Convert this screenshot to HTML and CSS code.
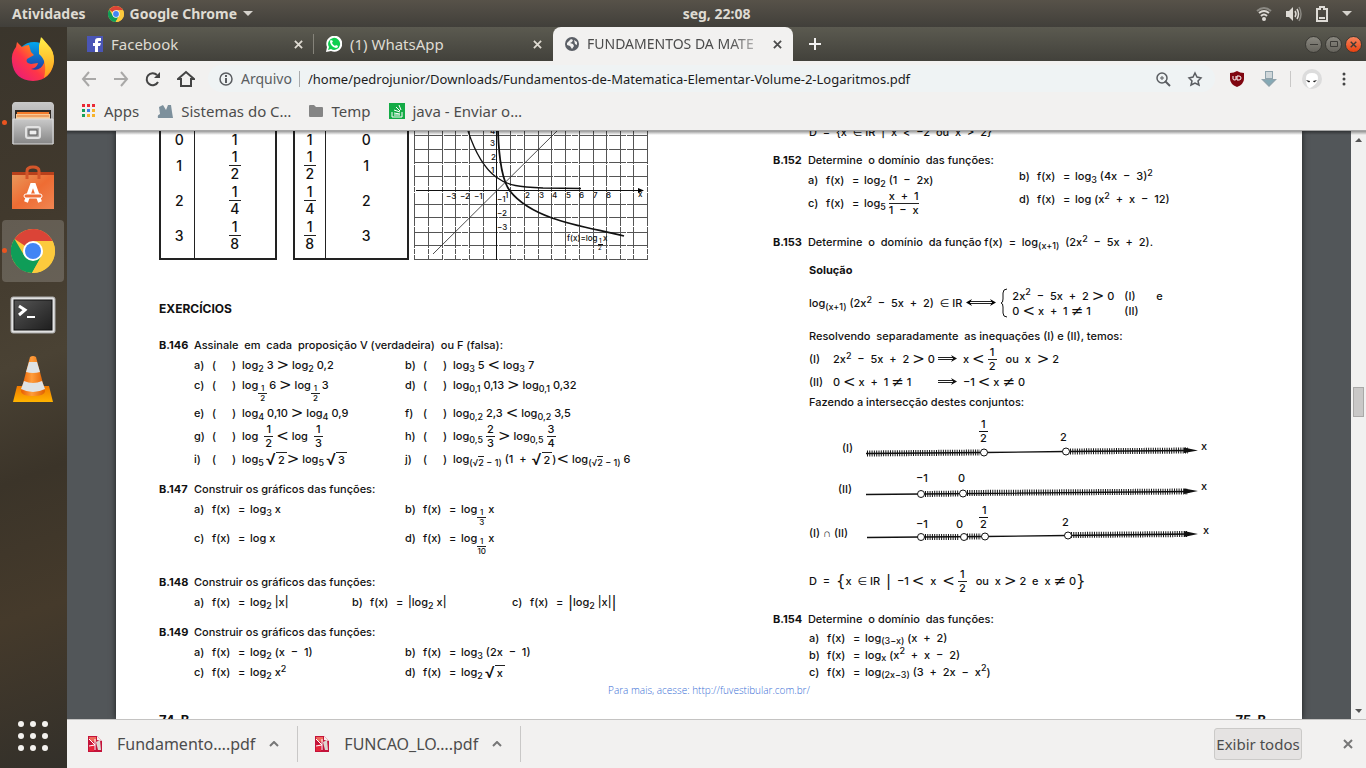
FILE: index.html
```html
<!DOCTYPE html>
<html lang="pt-BR">
<head>
<meta charset="utf-8">
<title>Fundamentos de Matemática Elementar</title>
<link rel="stylesheet" href="styles.css">
</head>
<body>
<svg class="defs" aria-hidden="true">
  <defs>
    <linearGradient id="ffr" x1="0" y1="1" x2="1" y2="0"><stop offset="0" stop-color="#e31587"/><stop offset=".4" stop-color="#ff3647"/><stop offset=".7" stop-color="#ff980e"/><stop offset="1" stop-color="#fff44f"/></linearGradient>
    <linearGradient id="ffb" x1="0" y1="0" x2="0" y2="1"><stop offset="0" stop-color="#00a8f0"/><stop offset="1" stop-color="#2a1e8c"/></linearGradient>
    <linearGradient id="ffy" x1="0" y1="0" x2="0" y2="1"><stop offset="0" stop-color="#fff14a"/><stop offset="1" stop-color="#ff9c1a"/></linearGradient>
    <linearGradient id="steel" x1="0" y1="0" x2="0" y2="1"><stop offset="0" stop-color="#c9c9c9"/><stop offset="1" stop-color="#868686"/></linearGradient>
    <linearGradient id="bag" x1="0" y1="0" x2="1" y2="1"><stop offset="0" stop-color="#e9975b"/><stop offset=".5" stop-color="#ee6c33"/><stop offset="1" stop-color="#f08653"/></linearGradient>
    <linearGradient id="term" x1="0" y1="0" x2="1" y2="1"><stop offset="0" stop-color="#555"/><stop offset="1" stop-color="#1e1e1e"/></linearGradient>
    <linearGradient id="vlc" x1="0" y1="0" x2="1" y2="0"><stop offset="0" stop-color="#e85e00"/><stop offset=".45" stop-color="#ff9d3c"/><stop offset="1" stop-color="#e06000"/></linearGradient>
    <linearGradient id="base" x1="0" y1="0" x2="0" y2="1"><stop offset="0" stop-color="#f07800"/><stop offset="1" stop-color="#ffb400"/></linearGradient>
    <symbol id="chrome" viewBox="0 0 44 44">
      <circle cx="22" cy="22" r="22" fill="#fcca3d"/>
      <path d="M22 22 3.500 10A22 22 0 0 1 41.500 12H22Z" fill="#db4437"/>
      <path d="M3.500 10A22 22 0 0 0 21 44L30.500 27 22 22 13.500 27Z" fill="#0f9d58"/>
      <path d="M22 12H41.500A22 22 0 0 1 21 44L30.500 27Z" fill="#fcca3d"/>
      <circle cx="22" cy="22" r="10" fill="#fff"/><circle cx="22" cy="22" r="8" fill="#4285f4"/>
    </symbol>
    <symbol id="pdf" viewBox="0 0 16 16">
      <path d="M1 0H10L15 5V16H1Z" fill="#c4123a"/><path d="M2 1H9V6L3 5Z" fill="#ef6a5c"/><path d="M2 11 7 6V15H2Z" fill="#e6253a"/>
      <path d="M2 3 8 9 2 10M8 3V14" fill="none" stroke="#fff" stroke-width="1"/><path d="M9 6 13 4 14 14H11Z" fill="#dcd6d0"/><path d="M10 0V4L15 5Z" fill="#f5f0ee"/>
    </symbol>
    <symbol id="x" viewBox="0 0 10 10"><path d="M1 1 9 9M9 1 1 9" stroke="currentColor" stroke-width="2" fill="none"/></symbol>
    <symbol id="imp" viewBox="0 0 22 8"><path d="M1 2.500H17M1 4.500H17" stroke="#222" stroke-width="1"/><path d="M14 0 20 3.500 14 7 16 3.500Z" fill="#111"/></symbol>
  </defs>
</svg>

<header class="topbar">
  <button class="top-btn" type="button">Atividades</button>
  <button class="top-btn app" type="button"><svg width="16" height="16"><use href="#chrome"/></svg>Google Chrome<svg width="10" height="6"><path d="M0 0H10L5 5Z" fill="#d5d2cc"/></svg></button>
  <span class="clock">seg, 22:08</span>
  <div class="status">
    <svg width="16" height="16" viewBox="0 0 16 16" fill="none" stroke="#dedbd6"><path d="M1 5Q8-1 15 5" stroke="#8b8983" stroke-width="2"/><path d="M3 7Q8 3 13 7M5 10Q8 7 11 10" stroke-width="2"/><circle cx="8" cy="13" r="2" fill="#dedbd6" stroke="none"/></svg>
    <svg width="16" height="16" viewBox="0 0 16 16"><path d="M0 5H3L7 1V15L3 11H0Z" fill="#dedbd6"/><path d="M9 5Q11 8 9 11M11 3Q14 8 11 13" fill="none" stroke="#dedbd6" stroke-width="1.500"/><path d="M13 1Q17 8 13 15" fill="none" stroke="#8b8983" stroke-width="1.500"/></svg>
    <svg width="12" height="16" viewBox="0 0 12 16"><path d="M1 3H4V1H8V3H11V15H1Z" fill="none" stroke="#dedbd6" stroke-width="2"/><path d="M3 12H9" stroke="#dedbd6" stroke-width="2"/></svg>
    <svg width="10" height="6"><path d="M0 0H10L5 5Z" fill="#d5d2cc"/></svg>
  </div>
</header>

<div class="desktop">
  <nav class="dock" aria-label="Aplicativos">
    <button type="button" aria-label="Firefox"><svg width="46" height="46" viewBox="0 0 46 46"><circle cx="24" cy="24" r="18" fill="url(#ffb)"/><path d="M6 11 7 6 12 11Q16 9 19 9L21 16 24 19 17 23Q15 27 21 28L28 27Q27 32 21 33 30 36 34 27 36 15 29 10L32 2 38 9Q44 14 44 25 42 44 23 45 4 44 2 26 1 17 6 11Z" fill="url(#ffr)"/><path d="M29 10 31 1 37 8Q44 15 44 25 43 36 34 42 38 25 29 18Z" fill="url(#ffy)"/></svg></button>
    <button class="run" type="button" aria-label="Arquivos"><svg width="44" height="46" viewBox="0 0 44 46"><path d="M1 5Q2 2 4 2H40Q42 2 43 5L43 44H1Z" fill="url(#steel)"/><path d="M4 10H40V19H4Z" fill="#302a25"/><path d="M6 12H38V14H6Z" fill="#f47b2b"/><path d="M5 14H39V19H5Z" fill="#f7c894"/><path d="M6 16H38" stroke="#e5762f"/><path d="M2 19H42V44H2Z" fill="url(#steel)" stroke="#ddd"/><rect x="15" y="27" width="14" height="11" rx="2" fill="#a8a8a8" stroke="#e2e2e2" stroke-width="2"/><rect x="18" y="30" width="8" height="5" fill="#eee" stroke="#555"/></svg></button>
    <button type="button" aria-label="Programas"><svg width="42" height="46" viewBox="0 0 42 46"><path d="M0 8H42V17H0Z" fill="#b8401b"/><path d="M0 11H42V45H0Z" fill="url(#bag)"/><path d="M15 15V7Q15 3 21 3T27 7V15" fill="none" stroke="#d4562a" stroke-width="3"/><path d="M14 38 20 21H22L28 38" fill="none" stroke="#fff" stroke-width="4"/><rect x="12" y="30" width="18" height="4" rx="2" fill="#ef6f38" stroke="#fff" stroke-width="1"/></svg></button>
    <button class="run current" type="button" aria-label="Google Chrome"><svg width="44" height="44"><use href="#chrome"/></svg></button>
    <button type="button" aria-label="Terminal"><svg width="46" height="40" viewBox="0 0 46 40"><rect x="1" y="2" width="44" height="36" rx="2" fill="#e2e2e2" stroke="#aaa"/><rect x="4" y="5" width="38" height="30" fill="url(#term)" stroke="#111"/><path d="M9 11 15 15 9 20" fill="none" stroke="#fff" stroke-width="3"/><path d="M17 22H25" stroke="#fff" stroke-width="2"/></svg></button>
    <button type="button" aria-label="VLC"><svg width="42" height="48" viewBox="0 0 42 48"><path d="M5 31H37L41 47H1Z" fill="url(#base)"/><path d="M18 2Q21 0 24 2L33 36Q33 41 21 41T9 36Z" fill="url(#vlc)"/><path d="M17 7H25L28 17Q21 19 14 17ZM12 26Q21 30 30 26L33 34Q21 40 9 34Z" fill="#dfe3e5"/></svg></button>
    <button class="apps" type="button" aria-label="Mostrar aplicativos"><svg width="32" height="32" viewBox="0 0 32 32" fill="#f4f2ef"><circle cx="4" cy="4" r="3"/><circle cx="16" cy="4" r="3"/><circle cx="28" cy="4" r="3"/><circle cx="4" cy="16" r="3"/><circle cx="16" cy="16" r="3"/><circle cx="28" cy="16" r="3"/><circle cx="4" cy="28" r="3"/><circle cx="16" cy="28" r="3"/><circle cx="28" cy="28" r="3"/></svg></button>
  </nav>

  <main class="window">
    <div class="tabs">
      <div class="tab first"><svg width="16" height="16"><rect width="16" height="16" fill="#4a55b5"/><path d="M8 16V10H6V7H8V5Q8 2 11 2H14V5H12Q11 5 11 6V7H14L13 10H11V16Z" fill="#fff"/></svg><a href="#fb">Facebook</a><button type="button" aria-label="Fechar"><svg width="9" height="9"><use href="#x"/></svg></button></div>
      <div class="tab"><svg width="16" height="16" viewBox="0 0 16 16"><path d="M0 16 1 11A8 8 0 1 1 5 15Z" fill="#fff"/><path d="M2 14 3 11A6 6 0 1 1 5 13Z" fill="#10cf50"/><path d="M5 4 7 5 6 7Q7 9 9 10L10 9 12 10Q12 12 10 12 5 11 4 6 4 4 5 4Z" fill="#fff"/></svg><a href="#wa">(1) WhatsApp</a><button type="button" aria-label="Fechar"><svg width="9" height="9"><use href="#x"/></svg></button></div>
      <div class="tab active"><svg width="14" height="14" viewBox="0 0 14 14"><circle cx="7" cy="7" r="7" fill="#5b5f66"/><path d="M2 6 6 2 8 3 7 5 5 6 8 7 9 9 7 12 5 9 2 8ZM9 3 12 5V8L10 7Z" fill="#f2f1f0"/></svg><a href="#doc">FUNDAMENTOS DA MATE</a><button type="button" aria-label="Fechar"><svg width="9" height="9"><use href="#x"/></svg></button></div>
      <button class="newtab" type="button" aria-label="Nova guia"><svg width="12" height="12"><path d="M6 0V12M0 6H12" stroke="#f2f1f0" stroke-width="2"/></svg></button>
      <div class="winbtns">
        <button type="button" aria-label="Minimizar"><svg width="8" height="8"><path d="M0 4.500H8" stroke="#3c3b37"/></svg></button>
        <button type="button" aria-label="Maximizar"><svg width="8" height="8"><path d="M.5 1.500H7.500V6.500H.5Z" fill="none" stroke="#3c3b37"/></svg></button>
        <button class="close" type="button" aria-label="Fechar janela"><svg width="7" height="7"><use href="#x"/></svg></button>
      </div>
    </div>

    <div class="toolbar">
      <button class="dim" type="button" aria-label="Voltar"><svg width="16" height="16" viewBox="0 0 16 16"><path d="M15 8H2M8 1 2 8 8 15" fill="none" stroke="currentColor" stroke-width="2"/></svg></button>
      <button class="dim" type="button" aria-label="Avançar"><svg width="16" height="16" viewBox="0 0 16 16"><path d="M1 8H14M8 1 14 8 8 15" fill="none" stroke="currentColor" stroke-width="2"/></svg></button>
      <button type="button" aria-label="Recarregar"><svg width="16" height="16" viewBox="0 0 16 16"><path d="M13 11A6 6 0 1 1 12 4" fill="none" stroke="currentColor" stroke-width="2"/><path d="M15 1V7H9Z" fill="currentColor"/></svg></button>
      <button type="button" aria-label="Início"><svg width="18" height="18" viewBox="0 0 18 18"><path d="M1 9 9 2 17 9H14V16H4V9Z" fill="none" stroke="currentColor" stroke-width="2"/></svg></button>
      <div class="omni">
        <svg width="16" height="16" viewBox="0 0 16 16"><circle cx="8" cy="8" r="6" fill="none" stroke="#5a5d61" stroke-width="1.500"/><path d="M8 7V12M8 4V6" stroke="#5a5d61" stroke-width="2"/></svg>
        <label for="url">Arquivo</label>
        <input id="url" type="text" value="/home/pedrojunior/Downloads/Fundamentos-de-Matematica-Elementar-Volume-2-Logaritmos.pdf">
        <button type="button" aria-label="Zoom"><svg width="16" height="16" viewBox="0 0 16 16" fill="none" stroke="currentColor"><circle cx="7" cy="7" r="5" stroke-width="1.500"/><path d="M10 10 15 15" stroke-width="2"/><path d="M7 5V9M5 7H9"/></svg></button>
        <button type="button" aria-label="Favorito"><svg width="16" height="16" viewBox="0 0 16 16"><path d="M8 2 10 6 14 7 11 10 12 14 8 12 4 14 5 10 2 7 6 6Z" fill="none" stroke="currentColor" stroke-width="1.500"/></svg></button>
      </div>
      <button type="button" aria-label="uBlock"><svg width="16" height="16" viewBox="0 0 16 16"><path d="M8 0Q11 2 15 2V8Q15 13 8 16 1 13 1 8V2Q5 2 8 0Z" fill="#800610"/><path d="M4 5V8Q4 9 6 9 7 9 7 8V5M8 9V5H10Q12 5 12 7T10 9Z" fill="none" stroke="#fff" stroke-width="1"/></svg></button>
      <button type="button" aria-label="Baixar"><svg width="16" height="16" viewBox="0 0 16 16"><path d="M4 0H12V8H16L8 16 0 8H4Z" fill="#8fa3ac"/><path d="M5 1H11V7H5Z" fill="#cfd6d9"/><path d="M3 9H13L8 14Z" fill="#84a9b5"/></svg></button>
      <span class="vsep"></span>
      <button class="avatar" type="button" aria-label="Perfil"><svg width="20" height="20" viewBox="0 0 20 20"><circle cx="10" cy="10" r="10" fill="#dcdcdc"/><path d="M4 9Q4 4 10 4T16 9 10 18 4 9Z" fill="#fff"/><path d="M4 11 8 12Q8 14 6 13ZM15 11 11 12Q12 14 13 13Z" fill="#222"/></svg></button>
      <button type="button" aria-label="Menu"><svg width="16" height="16" fill="currentColor"><circle cx="8" cy="3" r="1.500"/><circle cx="8" cy="8" r="1.500"/><circle cx="8" cy="13" r="1.500"/></svg></button>
    </div>

    <nav class="bookmarks" aria-label="Favoritos">
      <a href="#apps"><svg width="14" height="14" viewBox="0 0 14 14"><path d="M0 0H3V3H0ZM5 0H8V3H5ZM10 0H13V3H10Z" fill="#ea2a35"/><path d="M0 5H3V8H0ZM0 10H3V13H0Z" fill="#18a05a"/><path d="M5 5H8V8H5Z" fill="#3f7de8"/><path d="M10 5H13V8H10ZM5 10H8V13H5ZM10 10H13V13H10Z" fill="#f7b32a"/></svg>Apps</a>
      <a href="#sis"><svg width="16" height="14" viewBox="0 0 16 14"><path d="M1 14Q0 11 3 10L2 3 6 1 9 6 11 1H14L15 8 16 14Z" fill="#7d909c"/></svg>Sistemas do C…</a>
      <a href="#temp"><svg width="14" height="12" viewBox="0 0 14 12"><path d="M0 1Q0 0 1 0H5L7 2H13Q14 2 14 3V11Q14 12 13 12H1Q0 12 0 11Z" fill="#858585"/></svg>Temp</a>
      <a href="#java"><svg width="16" height="16" viewBox="0 0 16 16"><path d="M0 0H16V16H0Z" fill="#14ab46"/><path d="M3 9V14H13V9M5 12H11M5 10 11 11M5 7 11 9M7 4 11 8M10 2 12 7" fill="none" stroke="#fff"/></svg>java - Enviar o…</a>
    </nav>

    <div class="viewer">
      <article class="page">
        <section class="left">
          <div class="figures">
            <table class="t1"><tbody>
              <tr class="r0"><td>0</td><td>1</td></tr>
              <tr><td>1</td><td><span class="frac"><i>1</i><i>2</i></span></td></tr>
              <tr><td>2</td><td><span class="frac"><i>1</i><i>4</i></span></td></tr>
              <tr class="last"><td>3</td><td><span class="frac"><i>1</i><i>8</i></span></td></tr>
            </tbody></table>
            <table class="t2"><tbody>
              <tr class="r0"><td>1</td><td>0</td></tr>
              <tr><td><span class="frac"><i>1</i><i>2</i></span></td><td>1</td></tr>
              <tr><td><span class="frac"><i>1</i><i>4</i></span></td><td>2</td></tr>
              <tr class="last"><td><span class="frac"><i>1</i><i>8</i></span></td><td>3</td></tr>
            </tbody></table>
            <svg class="graph" width="236" height="129" viewBox="413 131 236 129">
              <path d="M414.500 131V260M428.500 131V260M442.500 131V260M455.500 131V260M469.500 131V260M483.500 131V260M510.500 131V260M524.500 131V260M538.500 131V260M551.500 131V260M565.500 131V260M579.500 131V260M593.500 131V260M606.500 131V260M620.500 131V260M633.500 131V260M647.500 131V260" stroke="#555" stroke-dasharray="33 1 21 1 5 1"/>
              <path d="M414 135.500H648M414 149.500H648M414 162.500H648M414 176.500H648M414 204.500H648M414 217.500H648M414 232.500H648M414 245.500H648M414 259.500H648" stroke="#555" stroke-dasharray="29 1 17 1 6 1"/>
              <path d="M496.500 131V260M416 190.500H642" stroke="#111"/><path d="M638 188 644 190.500 638 193Z"/>
              <path d="M433 254 557 131" stroke="#222" stroke-width=".8"/>
              <g fill="none" stroke="#111"><path d="M468 131C474 149 484 168 496 177S520 187 543 188L581 188.500" stroke-width="1.300"/><path d="M498 131C499 162 503 182 510 191S530 210 552 218 600 230 624 236" stroke-width="1.800"/></g>
              <g class="lbl"><text x="446" y="199">−3</text><text x="460" y="199">−2</text><text x="474" y="199">−1</text><text x="505" y="198">1</text><text x="525" y="198">2</text><text x="539" y="198">3</text><text x="552" y="198">4</text><text x="566" y="198">5</text><text x="579" y="198">6</text><text x="593" y="198">7</text><text x="606" y="198">8</text><text x="638" y="197">x</text><text x="490" y="146">3</text><text x="491" y="160">2</text><text x="491" y="173">1</text><text x="497" y="202">−1</text><text x="497" y="216">−2</text><text x="497" y="230">−3</text><text x="490" y="134">4</text><text x="567" y="241">f(x)=log</text><text x="603" y="241">x</text><text class="tiny" x="599" y="243">1</text><text class="tiny" x="598" y="250">2</text><path d="M598 244.500H603" stroke="#111"/></g>
            </svg>
          </div>

          <h2 class="heading">EXERCÍCIOS</h2>

          <div class="ex b146">
            <h3><b>B.146</b> Assinale  em  cada  proposição V (verdadeira)  ou F (falsa):</h3>
            <div class="opts">
              <p><span class="k">a)</span><span class="box">(</span><span class="cb">)</span>log<sub>2</sub> 3 <span class="rel">&gt;</span> log<sub>2</sub> 0,2</p>
              <p><span class="k">b)</span><span class="box">(</span><span class="cb">)</span>log<sub>3</sub> 5 <span class="rel">&lt;</span> log<sub>3</sub> 7</p>
              <p><span class="k">c)</span><span class="box">(</span><span class="cb">)</span>log<span class="subfrac"><i>1</i><i>2</i></span>6 <span class="rel">&gt;</span> log<span class="subfrac"><i>1</i><i>2</i></span>3</p>
              <p><span class="k">d)</span><span class="box">(</span><span class="cb">)</span>log<sub>0,1</sub> 0,13 <span class="rel">&gt;</span> log<sub>0,1</sub> 0,32</p>
            </div>
            <div class="opts gap8">
              <p><span class="k">e)</span><span class="box">(</span><span class="cb">)</span>log<sub>4</sub> 0,10 <span class="rel">&gt;</span> log<sub>4</sub> 0,9</p>
              <p><span class="k">f)</span><span class="box">(</span><span class="cb">)</span>log<sub>0,2</sub> 2,3 <span class="rel">&lt;</span> log<sub>0,2</sub> 3,5</p>
              <p class="tall"><span class="k">g)</span><span class="box">(</span><span class="cb">)</span>log <span class="frac"><i>1</i><i>2</i></span><span class="rel">&lt;</span> log <span class="frac"><i>1</i><i>3</i></span></p>
              <p class="tall"><span class="k">h)</span><span class="box">(</span><span class="cb">)</span>log<sub>0,5</sub> <span class="frac"><i>2</i><i>3</i></span> <span class="rel">&gt;</span> log<sub>0,5</sub> <span class="frac"><i>3</i><i>4</i></span></p>
              <p><span class="k">i)</span><span class="box">(</span><span class="cb">)</span>log<sub>5</sub><span class="root">√</span><span class="rad">2</span> <span class="rel">&gt;</span> log<sub>5</sub><span class="root">√</span><span class="rad">3</span></p>
              <p><span class="k">j)</span><span class="box">(</span><span class="cb">)</span>log<sub>(√<span class="over">2</span> − 1)</sub> (1  + <span class="root">√</span><span class="rad">2</span>)<span class="rel">&lt;</span> log<sub>(√<span class="over">2</span> − 1)</sub> 6</p>
            </div>
          </div>

          <div class="ex mt10">
            <h3><b>B.147</b> Construir os gráficos das funções:</h3>
            <div class="opts spread">
              <p><span class="k">a)</span><span class="fx">f(x)</span><span class="eq">=</span>log<sub>3</sub> x</p>
              <p><span class="k">b)</span><span class="fx">f(x)</span><span class="eq">=</span>log<span class="subfrac"><i>1</i><i>3</i></span>x</p>
              <p><span class="k">c)</span><span class="fx">f(x)</span><span class="eq">=</span>log x</p>
              <p><span class="k">d)</span><span class="fx">f(x)</span><span class="eq">=</span>log<span class="subfrac"><i>1</i><i>10</i></span>x</p>
            </div>
          </div>

          <div class="ex mt24">
            <h3><b>B.148</b> Construir os gráficos das funções:</h3>
            <div class="opts three">
              <p><span class="k">a)</span><span class="fx">f(x)</span><span class="eq">=</span>log<sub>2</sub> |x|</p>
              <p><span class="k">b)</span><span class="fx">f(x)</span><span class="eq">=</span>|log<sub>2</sub> x|</p>
              <p><span class="k">c)</span><span class="fx">f(x)</span><span class="eq">=</span><span class="rel">|</span>log<sub>2</sub> |x|<span class="rel">|</span></p>
            </div>
          </div>

          <div class="ex mt10">
            <h3><b>B.149</b> Construir os gráficos das funções:</h3>
            <div class="opts">
              <p><span class="k">a)</span><span class="fx">f(x)</span><span class="eq">=</span>log<sub>2</sub> (x  −  1)</p>
              <p><span class="k">b)</span><span class="fx">f(x)</span><span class="eq">=</span>log<sub>3</sub> (2x  −  1)</p>
              <p><span class="k">c)</span><span class="fx">f(x)</span><span class="eq">=</span>log<sub>2</sub> x<sup>2</sup></p>
              <p><span class="k">d)</span><span class="fx">f(x)</span><span class="eq">=</span>log<sub>2</sub><span class="root">√</span><span class="rad">x</span></p>
            </div>
          </div>
        </section>

        <section class="right">
          <p class="ind cut">D  =  {x  ∈ IR  |  x  &lt;  −2  ou  x  &gt;  2}</p>
          <div class="ex mt8">
            <h3><b>B.152</b> Determine  o domínio  das funções:</h3>
            <div class="opts">
              <p><span class="k">a)</span><span class="fx">f(x)</span><span class="eq">=</span>log<sub>2</sub> (1  −  2x)</p>
              <p class="up"><span class="k">b)</span><span class="fx">f(x)</span><span class="eq">=</span>log<sub>3</sub> (4x  −  3)<sup>2</sup></p>
              <p class="tall"><span class="k">c)</span><span class="fx">f(x)</span><span class="eq">=</span>log<sub>5</sub> <span class="frac"><i>x  +  1</i><i>1  −  x</i></span></p>
              <p class="tall up"><span class="k">d)</span><span class="fx">f(x)</span><span class="eq">=</span>log (x<sup>2</sup>  +  x  −  12)</p>
            </div>
          </div>
          <div class="ex mt16">
            <h3><b>B.153</b> Determine  o  domínio  da função f(x)  =  log<sub>(x+1)</sub>  (2x<sup>2</sup>  −  5x  +  2).</h3>
            <h4 class="ind mt8">Solução</h4>
            <div class="ind system mt8">
              <p>log<sub>(x+1)</sub> (2x<sup>2</sup>  −  5x  +  2)  ∈ IR</p>
              <svg width="30" height="8" viewBox="0 0 30 8"><path d="M3 2.500H27M3 4.500H27" stroke="#222"/><path d="M6 0 0 3.500 6 7 4 3.500ZM24 0 30 3.500 24 7 26 3.500Z"/></svg>
              <svg width="8" height="30" viewBox="0 0 8 30"><path d="M7 1Q3 1 3 5V11Q3 15 1 15 3 15 3 19V25Q3 29 7 29" fill="none" stroke="#111"/></svg>
              <div class="cases">
                <p>2x<sup>2</sup>  −  5x  +  2 <span class="rel">&gt;</span> 0</p><p>(I)</p><p>e</p>
                <p>0 <span class="rel">&lt;</span> x  +  1 <span class="rel">≠</span> 1</p><p>(II)</p>
              </div>
            </div>
            <p class="ind mt8">Resolvendo  separadamente  as inequações (I) e (II), temos:</p>
            <p class="ind steps tall"><span class="num">(I)</span><span class="lhs">2x<sup>2</sup>  −  5x  +  2 <span class="rel">&gt;</span> 0</span><svg width="22" height="8"><use href="#imp"/></svg>x <span class="rel">&lt;</span> <span class="frac"><i>1</i><i>2</i></span>  ou  x  <span class="rel">&gt;</span> 2</p>
            <p class="ind steps"><span class="num">(II)</span><span class="lhs">0 <span class="rel">&lt;</span> x  +  1 <span class="rel">≠</span> 1</span><svg width="22" height="8"><use href="#imp"/></svg>−1 <span class="rel">&lt;</span> x <span class="rel">≠</span> 0</p>
            <p class="ind">Fazendo a intersecção destes conjuntos:</p>
          </div>
          <svg class="lines" width="420" height="136" viewBox="800 411 420 136">
            <g stroke="#111" fill="none">
              <path d="M866 452.500 984 451.500 1066 450.500 1190 449.500M866 493.500 921 493 1190 490.500M867 536.500 921 536 985 535.500 1067 534.500 1190 533" stroke-width="1.300"/>
              <g stroke-width="6" stroke-dasharray="1 1.300"><path d="M867 452.500 980 451.500"/><path d="M1070 450.500 1188 449.500"/><path d="M925 493 959 492.500"/><path d="M967 492 1188 490.500"/><path d="M925 536 959 535.900"/><path d="M967 535.500 981 535.400"/><path d="M1071 534 1188 533"/></g>
              <path d="M979 430.500H988M979 516.500H988"/>
              <path d="M1184 446.500 1198 449.500 1184 452ZM1184 487.500 1198 490 1184 493ZM1184 530 1198 533 1184 536Z" fill="#111" stroke="none"/>
            </g>
            <g fill="#fff" stroke="#111"><circle cx="984" cy="451.500" r="3.500"/><circle cx="1066" cy="450.500" r="3.500"/><circle cx="921" cy="493" r="3.500"/><circle cx="963" cy="492.500" r="3.500"/><circle cx="921" cy="536" r="3.500"/><circle cx="964" cy="536" r="3.500"/><circle cx="985" cy="535.500" r="3.500"/><circle cx="1068" cy="534.500" r="3.500"/></g>
            <g class="mtx"><text x="842" y="451">(I)</text><text x="838" y="492">(II)</text><text x="809" y="536">(I) ∩ (II)</text><text x="1201" y="449">x</text><text x="1201" y="489">x</text><text x="1203" y="533">x</text><text x="981" y="427">1</text><text x="980" y="441">2</text><text x="1060" y="440">2</text><text x="916" y="481">−1</text><text x="958" y="481">0</text><text x="916" y="527">−1</text><text x="956" y="527">0</text><text x="982" y="513">1</text><text x="980" y="527">2</text><text x="1062" y="525">2</text></g>
          </svg>
          <p class="ind answer">D  =  <span class="rel">{</span>x  ∈ IR  <span class="rel">|</span>  −1 <span class="rel">&lt;</span>  x  <span class="rel">&lt;</span> <span class="frac"><i>1</i><i>2</i></span>  ou  x <span class="rel">&gt;</span> 2  e  x <span class="rel">≠</span> 0<span class="rel">}</span></p>
          <div class="ex mt16">
            <h3><b>B.154</b> Determine  o domínio  das funções:</h3>
            <div class="tight">
              <p><span class="k">a)</span><span class="fx">f(x)</span><span class="eq">=</span>log<sub>(3−x)</sub> (x  +  2)</p>
              <p><span class="k">b)</span><span class="fx">f(x)</span><span class="eq">=</span>log<sub>x</sub> (x<sup>2</sup>  +  x  −  2)</p>
              <p><span class="k">c)</span><span class="fx">f(x)</span><span class="eq">=</span>log<sub>(2x−3)</sub> (3  +  2x  −  x<sup>2</sup>)</p>
            </div>
          </div>
        </section>

        <footer class="foot">
          <a href="#fuvestibular">Para mais, acesse: http://fuvestibular.com.br/</a>
          <div class="folio"><b>74-B</b><b>75-B</b></div>
        </footer>
      </article>
      <div class="scroll" aria-hidden="true">
        <svg width="7" height="5"><path d="M0 4 4 0 7 4Z" fill="#555"/></svg>
        <span class="thumb"></span>
        <svg width="7" height="5"><path d="M0 0 4 4 7 0Z" fill="#555"/></svg>
      </div>
    </div>

    <footer class="downloads">
      <button class="dl" type="button"><svg width="16" height="16"><use href="#pdf"/></svg><span>Fundamento….pdf</span><svg width="10" height="6"><path d="M1 5 5 1 9 5" fill="none" stroke="#777" stroke-width="2"/></svg></button>
      <button class="dl" type="button"><svg width="16" height="16"><use href="#pdf"/></svg><span>FUNCAO_LO….pdf</span><svg width="10" height="6"><path d="M1 5 5 1 9 5" fill="none" stroke="#777" stroke-width="2"/></svg></button>
      <button class="showall" type="button">Exibir todos</button>
      <button class="dismiss" type="button" aria-label="Fechar"><svg width="10" height="10"><use href="#x"/></svg></button>
    </footer>
  </main>
</div>
</body>
</html>
```

FILE: styles.css
```css
* { box-sizing: border-box; }
body {
  margin: 0; height: 100vh; overflow: hidden;
  display: flex; flex-direction: column;
  font-family: "Noto Sans", "Open Sans", sans-serif; font-size: 14px; color: #4c4c4c;
}
button { border: 0; padding: 0; background: none; font: inherit; color: inherit; display: flex; align-items: center; justify-content: center; }
a { color: inherit; text-decoration: none; }
svg { flex: none; display: block; }
h2, h3, h4, p { margin: 0; font-weight: 500; font-size: inherit; }
.defs { position: absolute; width: 0; height: 0; }

/* Desktop top bar */
.topbar {
  flex: none; height: 27px; padding: 0 14px 0 12px; display: flex; align-items: center;
  gap: 22px; background: linear-gradient(#575249, #413f3a); color: #dfdbd2; font-weight: 700; font-size: 14px;
}
.app { gap: 6px; }
.clock { flex: 1; text-align: center; padding-right: 76px; }
.status { display: flex; align-items: center; gap: 14px; }

.desktop { flex: 1; min-height: 0; display: flex; }
.dock {
  flex: none; width: 67px; display: flex; flex-direction: column;
  background: linear-gradient(160deg, #3a352c 0%, #41392d 25%, #4a4234 45%, #3b3429 60%, #453a2b 78%, #33302a 100%);
}
.dock button { position: relative; width: 66px; height: 64px; }
.dock .current::after { content: ""; position: absolute; inset: 1px 2px; border-radius: 4px; background: #ffffff2e; }
.dock .current svg { position: relative; z-index: 1; }
.dock .run::before { content: ""; position: absolute; left: 2px; top: 29px; width: 5px; height: 5px; border-radius: 50%; background: #e95420; z-index: 1; }
.dock .apps { margin-top: auto; }

/* Browser chrome */
.window { flex: 1; min-width: 0; display: flex; flex-direction: column; background: #f2f1f0; }
.tabs { flex: none; height: 34px; display: flex; background: linear-gradient(#5b5a50, #42413b); color: #dfdbd2; font-size: 15px; line-height: 18px; }
.tab { width: 239px; padding: 0 11px 0 12px; display: flex; align-items: center; gap: 8px; }
.tab.first { width: 247px; padding: 0 11px 0 20px; position: relative; }
.tab.first::after { content: ""; position: absolute; right: 0; top: 7px; width: 1px; height: 20px; background: #85837a; }
.tab a { flex: 1; overflow: hidden; white-space: nowrap; }
.tab.active { width: 240px; background: #f2f1f0; color: #4c4c4c; border-radius: 8px 8px 0 0; font-size: 14px; }
.tab.active a { -webkit-mask-image: linear-gradient(90deg, #000 80%, #0002); mask-image: linear-gradient(90deg, #000 80%, #0002); }
.newtab { width: 44px; }
.winbtns { margin-left: auto; padding-right: 4px; display: flex; align-items: center; gap: 3px; }
.winbtns button { width: 17px; height: 17px; border-radius: 50%; background: linear-gradient(#8a8880, #66645d); border: 1px solid #3a3934; }
.winbtns .close { background: linear-gradient(#f7855e, #e8410f); color: #3c3b37; }

.toolbar { flex: none; height: 35px; padding: 0 14px; display: flex; align-items: center; gap: 16px; color: #444; }
.dim { color: #a9a8a7; }
.omni { flex: 1; height: 27px; border-radius: 14px; background: #eff3f4; padding: 0 12px 0 10px; display: flex; align-items: center; color: #5a5d61; margin-right: -2px; margin-left: -3px; }
.omni label { margin: 0 7px; font-size: 14px; }
.omni input { flex: 1; min-width: 0; border: 0; border-left: 1px solid #a9abad; padding: 0 0 0 8px; height: 16px; background: none; outline: 0; font: inherit; font-size: 13px; color: #1c1c1c; }
.omni button { margin-left: 16px; }
.vsep { width: 1px; height: 16px; background: #c9c8c7; margin: 0 -3px; }
.avatar { margin: 0 -2px; }
.bookmarks { flex: none; height: 35px; padding: 0 15px 4px; display: flex; align-items: center; gap: 18px; font-size: 15px; border-bottom: 1px solid #a6a6a6; }
.bookmarks a { display: flex; align-items: center; gap: 8px; }

/* Document viewer */
.viewer {
  flex: 1; min-height: 0; overflow: hidden; display: flex; background: #525659; padding-left: 49px; position: relative;
}
.viewer::before { content: ""; position: absolute; inset: 0 0 auto; height: 4px; background: linear-gradient(#0006, #0000); z-index: 1; }
.page {
  flex: 1; height: 1px; min-height: 100%; margin-right: 49px; background: #fff; box-shadow: 0 0 6px #000a;
  display: grid; grid-template-columns: 614fr 529fr; align-content: start; padding-left: 43px;
  font-family: Inter, "Liberation Sans", "DejaVu Sans", sans-serif; font-size: 11px; font-weight: 500; line-height: 20px; color: #111;
}
.page i { font-style: normal; }
.page p, .page h3 { display: flex; align-items: center; height: 20px; white-space: pre; }
.page .tall { height: 26px; }
.page .ind { margin-left: 36px; }
.page h3 b, .page h4 { font-weight: 700; }
.page h3 b { width: 32px; }
.mt8 { margin-top: 8px; }
.mt10 { margin-top: 10px; }
.mt16 { margin-top: 16px; }
.mt24 { margin-top: 24px; }

.figures { display: flex; height: 129px; }
.figures table { border-collapse: collapse; font-size: 14px; border: 2px solid #222; border-top: 0; text-align: center; line-height: 15px; }
.figures td { padding: 0; height: 35px; vertical-align: middle; }
.figures td:first-child { border-right: 1px solid #222; }
.figures .r0 td { height: 17px; }
.figures .last td { height: 41px; padding-bottom: 5px; }
.figures .frac { min-width: 12px; }
.t1 { width: 118px; margin-right: 16px; }
.t1 td:first-child { width: 34px; padding-left: 4px; }
.t2 { width: 116px; margin-right: 4px; }
.t2 td:first-child { width: 31px; }
.lbl, .mtx { fill: #111; }
.lbl { font-size: 8px; }
.tiny { font-size: 6px; }
.mtx { font-size: 11px; }
.heading { margin-top: 39px; font-weight: 700; }
.page .heading { font-size: 12px; }
.b146 { margin-top: 16px; }

.opts { display: grid; grid-template-columns: 211px 1fr; padding-left: 35px; }
.opts.gap8 { margin-top: 8px; }
.opts.spread { row-gap: 9px; }
.opts.three { grid-template-columns: 158px 160px 1fr; }
.tight { padding-left: 36px; }
.page .tight p { height: 17px; }
.k { width: 18px; }
.box { width: 20px; }
.cb { width: 10px; }
.fx { width: 26px; }
.eq { width: 12px; }
.page sub, .page sup { font-size: 9px; line-height: 10px; }
.page sub { padding-top: 7px; }
.page sup { padding-bottom: 7px; }
.rel { font-family: "DejaVu Sans", sans-serif; font-size: 15px; font-weight: 400; }
.frac, .subfrac { display: inline-flex; flex-direction: column; text-align: center; vertical-align: middle; }
.frac { line-height: 13px; margin: 0 3px; min-width: 9px; }
.frac i:first-child, .subfrac i:first-child { border-bottom: 1px solid #222; }
.figures .frac { line-height: 16px; }
.subfrac { margin: 16px 2px 0 0; font-size: 8px; line-height: 9px; min-width: 9px; }
.root { font-size: 16px; font-weight: 400; padding-left: 2px; }
.rad { border-top: 1px solid #222; line-height: 14px; padding: 0 2px; }
.over { border-top: 1px solid #222; }

.page .cut { margin-top: -9px; }
.up { margin-top: -4px; }
.system { display: flex; align-items: center; height: 30px; gap: 4px; }
.cases { display: grid; grid-template-columns: 112px 32px auto; }
.page .cases p { height: 15px; }
.num { width: 24px; }
.lhs { display: flex; align-items: center; width: 104px; }
.steps svg { margin-right: 4px; }
.lines { margin-left: 27px; }
.page .answer { height: 24px; margin-top: 21px; }
.foot { grid-column: 1 / -1; margin-left: -43px; }
.foot a { display: block; text-align: center; font: 300 10px/16px "Open Sans", sans-serif; color: #3b6fd6; }
.folio { display: flex; justify-content: space-between; padding: 12px 36px 0 43px; font-size: 13px; }

.scroll { flex: none; width: 15px; background: #f1f1f0; display: flex; flex-direction: column; align-items: center; justify-content: space-between; padding: 7px 0 5px; }
.thumb { width: 11px; height: 30px; margin-bottom: 48px; background: #c9c8c7; border: 1px solid #aaa9a8; }
.downloads { flex: none; height: 49px; border-top: 1px solid #c4c3c2; display: flex; align-items: center; font-size: 16px; }
.dl { height: 36px; padding: 0 18px 0 20px; gap: 14px; border-right: 1px solid #c9c8c7; }
.dl + .dl { padding-left: 16px; }
.showall { margin-left: auto; width: 88px; height: 32px; border: 1px solid #cbcac8; border-radius: 3px; background: #e5e3e2; font-size: 15px; }
.dismiss { width: 64px; padding-left: 27px; color: #777; }
```
